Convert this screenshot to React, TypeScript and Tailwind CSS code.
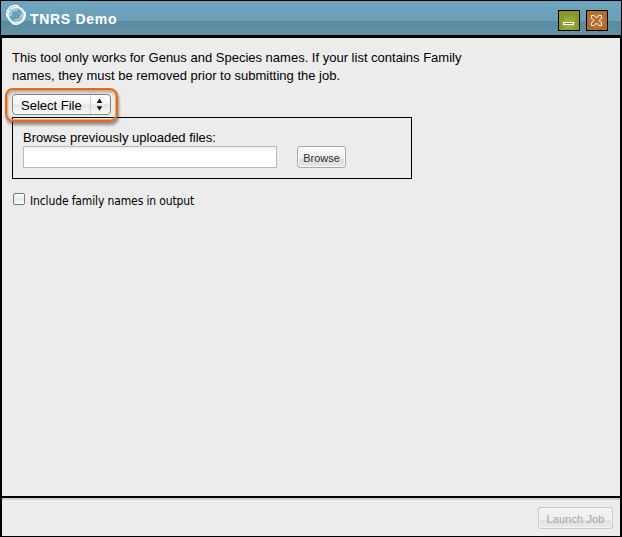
import type { ReactNode } from "react";

function Logo() {
  return (
    <svg viewBox="0 0 22 22" className="h-[22px] w-[22px] shrink-0" fill="none" stroke="#fff" strokeLinecap="round">
      <circle cx="11" cy="11" r="7.700" strokeWidth="2.800" opacity="0.5" />
      <path d="M2 13C0.500 8 3 3 8 1.700c2-.5 4-.4 5.500.3" strokeWidth="1.200" />
      <path d="M7 4.500C11 1.800 16.500 3 18.700 7.500c1.300 3 .8 6-.7 8" strokeWidth="1.300" />
      <path d="M20.200 8C21.300 13 19 18 14 19.800c-2.500.8-5 .5-6.800-.3" strokeWidth="1.200" />
      <path d="M15 17.500C11 20 5.500 18.700 3.500 14.500c-1.200-2.800-.7-5.700.7-8" strokeWidth="1.300" />
      <path d="M5.800 11.500C5.500 8 8.500 5.500 11.800 6M16.200 10.500c.3 3.500-2.700 6-6 5.500" strokeWidth="0.900" />
    </svg>
  );
}

function WindowButton({ className, label, children }: { className: string; label: string; children: ReactNode }) {
  return (
    <button aria-label={label} className={`flex h-[21px] w-[22px] items-center justify-center border border-black ${className}`}>
      {children}
    </button>
  );
}

function TitleBar() {
  return (
    <header className="flex h-[34px] shrink-0 bg-[linear-gradient(#70a5bf_0px,#6a9fb8_20px,#588ba1_20px,#6291a5_34px)] pl-1 pr-[13px]">
      <div className="pt-[3px]">
        <Logo />
      </div>
      <h1 className="ml-[3px] whitespace-nowrap pt-[10px] text-[14px] font-bold leading-4 tracking-[0.7px] text-white">TNRS Demo</h1>
      <div className="ml-auto flex gap-[6px] pt-[9px]">
        <WindowButton label="Minimize" className="bg-[radial-gradient(circle_at_50%_65%,#a4b94f,#87972c_60%)]">
          <svg width="20" height="19" viewBox="0 0 20 19">
            <rect x="4.500" y="11.500" width="10" height="2" fill="#87972c" stroke="#fff" />
          </svg>
        </WindowButton>
        <WindowButton label="Close" className="bg-[radial-gradient(circle,#d28b4b,#b46a29_65%)]">
          <svg width="20" height="19" viewBox="0 0 20 19" fill="#b46a29" stroke="#fff">
            <path d="M4.500 4.500h2.500l2.500 2.500 2.500-2.500h2.500v2.500l-2.500 2.500 2.500 2.500v2.500h-2.500l-2.500-2.500-2.500 2.500h-2.500v-2.500l2.500-2.500-2.500-2.500z" />
          </svg>
        </WindowButton>
      </div>
    </header>
  );
}

function FileSelect() {
  return (
    <div className="relative h-[21px] w-[99px]">
      <button className="flex h-[21px] w-[99px] items-center rounded-[4px] border border-[#858585] bg-[linear-gradient(#fff,#f3f3f3_48%,#e4e4e4_52%,#fafafa)] pl-2 text-[13px] leading-4 text-black">
        <span className="whitespace-nowrap pt-[2px]">Select File</span>
        <span className="ml-auto flex h-full w-[20px] items-center border-l border-[#cfcfcf] pl-[5px]">
          <svg width="7" height="13" viewBox="0 0 7 13" fill="#111">
            <path d="M3.500 0.500L6.300 5H0.700zM3.500 12.700L0.700 8.200h5.600z" />
          </svg>
        </span>
      </button>
      <div className="pointer-events-none absolute -left-[7px] -top-[6px] h-[34px] w-[113px] rounded-[8px] border-2 border-[#dc6d20] shadow-[1px_3px_3px_rgba(0,0,0,0.4),inset_0_0_0_1px_rgba(232,160,105,0.85),inset_1px_3px_3px_rgba(0,0,0,0.22)]" />
    </div>
  );
}

export default function App() {
  return (
    <div className="flex h-[537px] w-[622px] flex-col overflow-hidden bg-black p-px font-['Liberation_Sans',Arial,sans-serif] text-black">
      <TitleBar />
      <main className="mx-px mt-[3px] h-[458px] shrink-0 bg-[#ececec] pl-[10px] pt-[11px]">
        <p className="whitespace-nowrap text-[13px] leading-[18px]">
          This tool only works for Genus and Species names. If your list contains Family
          <br />
          names, they must be removed prior to submitting the job.
        </p>
        <div className="relative z-10 mt-[9px]">
          <FileSelect />
        </div>
        <section className="mt-[2px] h-[62px] w-[400px] border border-black pl-[10px] pt-[11px]">
          <label htmlFor="file" className="block whitespace-nowrap text-[13px] leading-[17px]">
            Browse previously uploaded files:
          </label>
          <div className="flex gap-5">
            <input id="file" className="h-[22px] w-[254px] border border-[#b5b8c8] bg-[linear-gradient(#eef0f0,#fff_5px)]" />
            <button className="h-[22px] w-[49px] rounded-[3px] border border-[#a9a9a9] bg-[linear-gradient(#fbfbfb,#eeeeee_12px,#dcdcdc_12px,#e6e6e6)] pt-[1px] text-[11px] leading-4 text-[#333] shadow-[inset_0_0_0_1px_#fafafa]">
              Browse
            </button>
          </div>
        </section>
        <label className="ml-px mt-[13px] flex h-[18px] gap-[5px] font-['DejaVu_Sans_Condensed','DejaVu_Sans',sans-serif] text-[12px] leading-[18px]">
          <input
            type="checkbox"
            className="mt-[1px] h-[12px] w-[12px] appearance-none rounded-[2px] border border-[#777] bg-[linear-gradient(#fff,#e8e8e8_50%,#fff)]"
          />
          <span className="whitespace-nowrap tracking-[-0.13px]">Include family names in output</span>
        </label>
      </main>
      <footer className="mx-px mt-[2px] flex h-[38px] shrink-0 justify-end border-t-2 border-[#d0d0d0] bg-[#ececec] pr-[7px] pt-[7px]">
        <button
          disabled
          className="h-[22px] w-[75px] rounded-[3px] border border-[#c9c9c9] bg-[linear-gradient(#f3f3f3,#eeeeee_12px,#e2e2e2_12px,#e8e8e8)] pt-[1px] text-[11px] leading-4 tracking-[0.1px] text-[#a5a5a5] shadow-[inset_0_0_0_1px_#f4f4f4]"
        >
          Launch Job
        </button>
      </footer>
    </div>
  );
}
